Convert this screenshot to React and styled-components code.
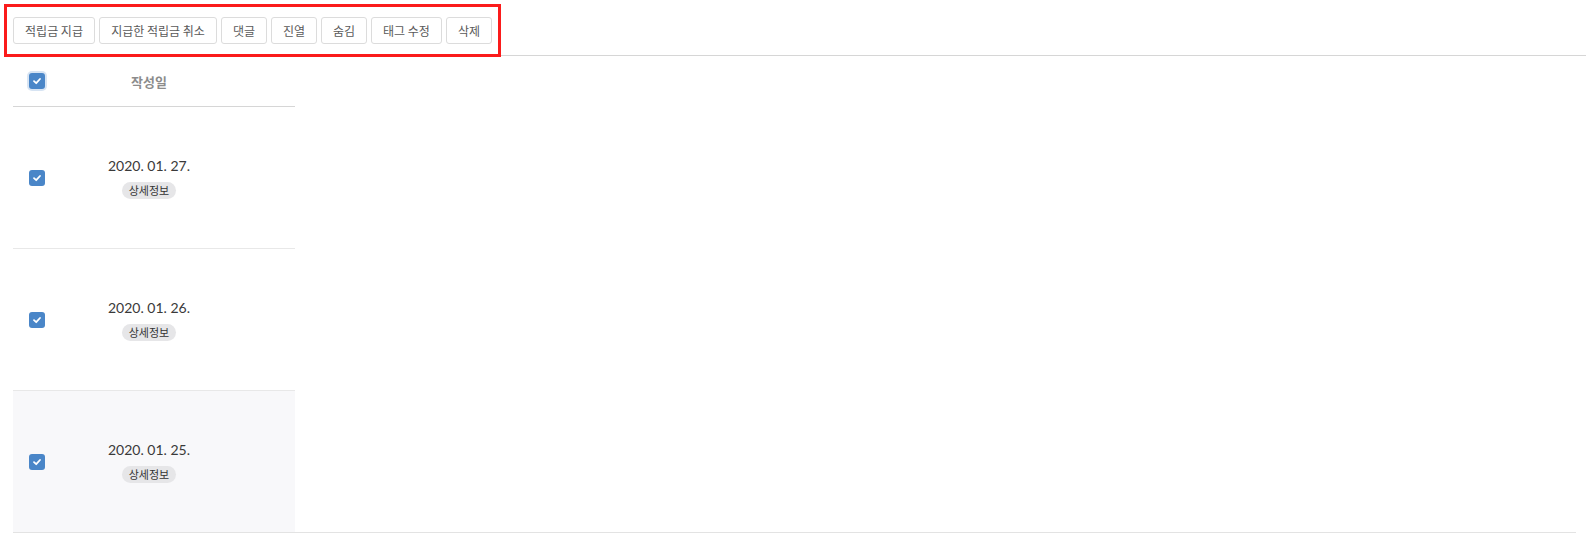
import styled, { createGlobalStyle } from "styled-components";

const Global = createGlobalStyle`
  body {
    margin: 0;
    background: #fff;
    font-family: Lato, "Noto Sans CJK KR", sans-serif;
  }
`;

const Page = styled.div`
  width: 1596px;
`;

const Toolbar = styled.div`
  display: flex;
  margin: 4px 10px 0 4px;
  border-bottom: 1px solid #d6d6d6;
`;

const Highlight = styled.div`
  display: flex;
  gap: 4px;
  padding: 10px 6px;
  border: 3px solid #fb1b1b;
  margin-bottom: -2px;
`;

const Button = styled.button`
  box-sizing: border-box;
  height: 27px;
  width: ${(p) => p.$w}px;
  padding: 0;
  border: 1px solid #dcdcdc;
  border-radius: 3px;
  background: #fff;
  color: #5a5a5a;
  font-family: "Noto Sans CJK KR", sans-serif;
  font-size: 12px;
  white-space: nowrap;
`;

const TableWrap = styled.div`
  margin: 0 20px 0 13px;
  border-bottom: 1px solid #e3e3e3;
`;

const Table = styled.div`
  width: 282px;
`;

const Row = styled.div`
  display: grid;
  grid-template-columns: 48px 176px 58px;
  align-items: center;
  height: ${(p) => (p.$head ? 50 : 141)}px;
  background: ${(p) => (p.$hover ? "#f8f8fa" : "transparent")};
  border-bottom: ${(p) =>
    p.$last ? "none" : `1px solid ${p.$head ? "#d6d6d6" : "#e8e8e8"}`};
`;

const Cell = styled.div`
  display: flex;
  flex-direction: column;
  align-items: center;
  justify-content: center;
`;

const Check = styled.span`
  display: flex;
  align-items: center;
  justify-content: center;
  width: 16px;
  height: 16px;
  border-radius: 3px;
  background: #4a86c8;
  box-shadow: ${(p) => (p.$focus ? "0 0 0 2px rgba(74,134,200,0.22)" : "none")};
`;

const HeadText = styled.span`
  font-family: "Noto Sans CJK KR", sans-serif;
  font-weight: 700;
  font-size: 13px;
  color: #8c8c8c;
`;

const DateText = styled.span`
  font-family: Lato, sans-serif;
  font-size: 14px;
  line-height: 18px;
  color: #3a3a3a;
`;

const Badge = styled.span`
  margin-top: 7px;
  height: 17px;
  line-height: 17px;
  padding: 0 7px;
  border-radius: 9px;
  background: #e6e6e8;
  color: #333;
  font-family: "Noto Sans CJK KR", sans-serif;
  font-size: 11px;
`;

const CheckBox = ({ focus }) => (
  <Check $focus={focus}>
    <svg width="10" height="10" viewBox="0 0 10 10">
      <path d="M2 5.2 L4.2 7.2 L8 3" fill="none" stroke="#fff" strokeWidth="1.8" strokeLinecap="round" strokeLinejoin="round" />
    </svg>
  </Check>
);

const buttons = [
  { label: "적립금 지급", w: 82 },
  { label: "지급한 적립금 취소", w: 118 },
  { label: "댓글", w: 46 },
  { label: "진열", w: 46 },
  { label: "숨김", w: 46 },
  { label: "태그 수정", w: 71 },
  { label: "삭제", w: 46 },
];

const rows = ["2020. 01. 27.", "2020. 01. 26.", "2020. 01. 25."];

export default function App() {
  return (
    <Page>
      <Global />
      <Toolbar>
        <Highlight>
          {buttons.map((b) => (
            <Button key={b.label} $w={b.w}>
              {b.label}
            </Button>
          ))}
        </Highlight>
      </Toolbar>
      <TableWrap>
        <Table>
          <Row $head>
            <Cell>
              <CheckBox focus />
            </Cell>
            <Cell>
              <HeadText>작성일</HeadText>
            </Cell>
            <Cell />
          </Row>
          {rows.map((d, i) => (
            <Row key={d} $hover={i === rows.length - 1} $last={i === rows.length - 1}>
              <Cell>
                <CheckBox />
              </Cell>
              <Cell>
                <DateText>{d}</DateText>
                <Badge>상세정보</Badge>
              </Cell>
              <Cell />
            </Row>
          ))}
        </Table>
      </TableWrap>
    </Page>
  );
}
